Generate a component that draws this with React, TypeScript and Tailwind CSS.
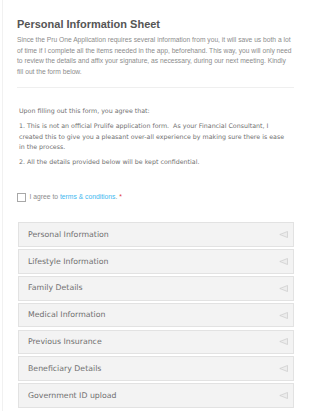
const sections = [
  "Personal Information",
  "Lifestyle Information",
  "Family Details",
  "Medical Information",
  "Previous Insurance",
  "Beneficiary Details",
  "Government ID upload",
];

function Arrow() {
  return (
    <svg width="9" height="7" viewBox="0 0 9 7" className="shrink-0">
      <polygon
        points="8.5,0.5 8.5,6.5 0.8,3.5"
        fill="#ececec"
        stroke="#cfcfcf"
        strokeWidth="0.8"
        strokeLinejoin="round"
      />
    </svg>
  );
}

export default function App() {
  return (
    <div className="min-h-screen bg-white">
      <div className="ml-[2px] min-h-screen border-l border-[#f1f1f1] pl-[14px] pr-[16px] pt-[18px] pb-[4px]">
        <h1 className="font-['Liberation_Sans',Arial,sans-serif] text-[11px] leading-[13px] font-bold text-[#555]">
          Personal Information Sheet
        </h1>
        <p className="mt-[4px] font-['Liberation_Sans',Arial,sans-serif] text-[6.7px] leading-[10.5px] text-[#8c8c8c]">
          Since the Pru One Application requires several information from you, it will save us both a lot of time if I complete all the items needed in the app, beforehand. This way, you will only need to review the details and affix your signature, as necessary, during our next meeting. Kindly fill out the form below.
        </p>
        <div className="mt-[10px] h-px bg-[#efefef]" />

        <div className="mt-[18px] pl-[2px] pr-[6px] font-['DejaVu_Sans',Verdana,sans-serif] text-[6.3px] leading-[10.3px] text-[#707070]">
          <p>Upon filling out this form, you agree that:</p>
          <p className="mt-[5px]">
            1. This is not an official Prulife application form.&nbsp; As your Financial Consultant, I created this to give you a pleasant over-all experience by making sure there is ease in the process.
          </p>
          <p className="mt-[5px]">2. All the details provided below will be kept confidential.</p>
        </div>

        <label className="mt-[25px] flex items-center gap-[4px] font-['Liberation_Sans',Arial,sans-serif] text-[6.75px] leading-[10px] text-[#8c8c8c]">
          <span className="block h-[8.5px] w-[8.5px] border border-[#a8a8a8] bg-white" />
          <span>
            I agree to <span className="text-[#3fb8ef]">terms &amp; conditions</span>.{" "}
            <span className="text-[#e0383b]">*</span>
          </span>
        </label>

        <div className="mt-[20px] ml-[1px] flex flex-col gap-[2.3px]">
          {sections.map((s) => (
            <div
              key={s}
              className="flex h-[24.5px] items-center justify-between border border-[#e2e2e2] bg-[#f3f3f3] pl-[9px] pr-[5px]"
            >
              <span className="font-['DejaVu_Sans',Verdana,sans-serif] text-[7.8px] text-[#707070]">
                {s}
              </span>
              <Arrow />
            </div>
          ))}
        </div>
      </div>
    </div>
  );
}
